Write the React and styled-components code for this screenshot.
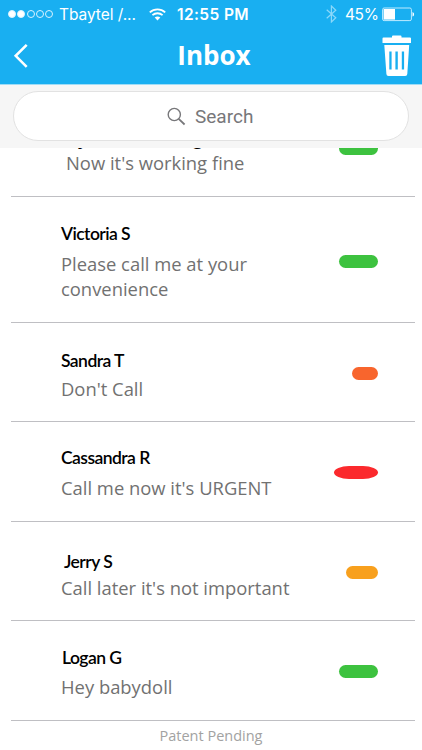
import React from 'react';
import styled, { createGlobalStyle } from 'styled-components';

const GlobalStyle = createGlobalStyle`
  * {
    box-sizing: border-box;
  }

  body {
    margin: 0;
    background-color: white;
  }
`;

const Screen = styled.div`
  width: 422px;
  height: 750px;
  display: flex;
  flex-direction: column;
  overflow: hidden;
  background-color: white;
  font-family: 'Open Sans', 'Noto Sans', sans-serif;
`;

const Header = styled.header`
  height: 84px;
  flex: none;
  background-color: #19aff1;
  color: white;
`;

const StatusBar = styled.div`
  height: 28px;
  display: flex;
  align-items: center;
  padding-left: 8px;
  font-family: Inter, Roboto, sans-serif;
  font-size: 16px;
  white-space: nowrap;
`;

const SignalDots = styled.div`
  display: flex;
  gap: 1.3px;
  width: 51px;
`;

const Dot = styled.span`
  width: 8px;
  height: 8px;
  border: 1px solid #d9f3ff;
  border-radius: 50%;
  background-color: ${({ $filled }) => ($filled ? 'white' : 'transparent')};
`;

const Carrier = styled.span`
  width: 90px;
  font-size: 15.5px;
  letter-spacing: -0.05px;
`;

const Clock = styled.span`
  width: 149px;
  margin-left: 11px;
  font-size: 15.5px;
  font-weight: 600;
  letter-spacing: 0.4px;
`;

const BatteryLevel = styled.span`
  width: 37px;
  margin-left: 8px;
  font-size: 15.5px;
  letter-spacing: -0.4px;
`;

const NavBar = styled.div`
  height: 56px;
  display: grid;
  grid-template-columns: 60px 1fr 60px;
  align-items: center;
  padding: 0 10px 1px 13px;
`;

const NavButton = styled.button`
  display: flex;
  justify-content: ${({ $end }) => ($end ? 'flex-end' : 'flex-start')};
  padding: 0;
  border: 0;
  background: none;
  color: white;
`;

const Title = styled.h1`
  margin: 0 0 2px 3px;
  font-size: 26px;
  font-weight: 700;
  line-height: 32px;
  text-align: center;
`;

const SearchBar = styled.div`
  height: 64px;
  flex: none;
  padding: 6px 13px 8px;
  border-top: 1px solid #9fdcf6;
  background-color: #f6f6f6;
`;

const SearchField = styled.div`
  height: 50px;
  display: flex;
  align-items: center;
  padding-left: 153px;
  gap: 9px;
  border: 1px solid #e2e2e2;
  border-radius: 25px;
  background-color: white;
  color: #77777a;
  font-family: Roboto, sans-serif;
  font-size: 19px;
`;

const ListViewport = styled.main`
  height: 573px;
  flex: none;
  display: flex;
  flex-direction: column;
  justify-content: flex-end;
  overflow: hidden;
  padding: 0 7px 0 11px;
`;

const Row = styled.article`
  height: ${({ $height }) => $height}px;
  flex: none;
  display: flex;
  align-items: center;
  justify-content: space-between;
  padding-left: 50px;
  padding-right: 37px;
  border-bottom: 1px solid #bfbfc3;
`;

const RowText = styled.div`
  align-self: flex-end;
  width: 240px;
  padding-bottom: ${({ $bottom }) => $bottom || 21}px;
`;

const Sender = styled.h2`
  margin: 0;
  padding-left: ${({ $indent }) => $indent || 0}px;
  padding-bottom: ${({ $gap }) => $gap}px;
  color: black;
  font-family: ${({ $large }) => ($large ? "'Open Sans'" : 'Lato')}, sans-serif;
  font-size: ${({ $large }) => ($large ? 17 : 17.5)}px;
  font-weight: ${({ $large }) => ($large ? 700 : 600)};
  line-height: 22px;
  letter-spacing: ${({ $large }) => ($large ? -0.3 : -0.55)}px;
  white-space: nowrap;
`;

const Message = styled.p`
  margin: 0;
  padding-left: ${({ $indent }) => $indent || 0}px;
  color: #717171;
  font-size: 18.4px;
  line-height: 25px;
  white-space: pre-line;
`;

const Badge = styled.span`
  width: ${({ $width }) => $width}px;
  height: 13px;
  flex: none;
  margin-top: ${({ $drop }) => $drop || 2}px;
  border-radius: ${({ $oval }) => ($oval ? '15px / 6.5px' : '7px')};
  background-color: ${({ $color }) => $color};
`;

const Footer = styled.footer`
  flex: 1;
  padding-top: 5px;
  color: #a2a2a2;
  font-size: 14.5px;
  line-height: 20px;
  text-align: center;
`;

const WifiIcon = () => (
  <svg width="17" height="13" viewBox="0 0 17 13" fill="none" stroke="white" strokeWidth="1.8">
    <path d="M0.8 4.4C5.2 0.4 11.8 0.4 16.2 4.4" />
    <path d="M3.4 7.2C6.3 4.6 10.7 4.6 13.6 7.2" />
    <path d="M8.5 12.4L5.7 9.5C7.3 8.1 9.7 8.1 11.3 9.5Z" fill="white" stroke="none" />
  </svg>
);

const BluetoothIcon = () => (
  <svg width="11" height="18" viewBox="0 0 11 18" fill="none" stroke="#8ad8fa" strokeWidth="1.2">
    <path d="M0.7 4.8L9.8 12.8L5.4 17V1L9.8 5.2L0.7 13.2" />
  </svg>
);

const BatteryIcon = () => (
  <svg width="33" height="15" viewBox="0 0 33 15" fill="none">
    <rect x="0.6" y="1" width="28.8" height="12.6" rx="1.5" stroke="#bfeaff" />
    <rect x="1.6" y="2" width="11.4" height="10.6" fill="white" />
    <path d="M30.5 5C32.6 5.8 32.6 8.8 30.5 9.6Z" fill="white" />
  </svg>
);

const BackIcon = () => (
  <svg width="16" height="26" viewBox="0 0 16 26" fill="none" stroke="white" strokeWidth="2.6">
    <path d="M13.7 1.8L2.7 12.8L13.7 23.8" />
  </svg>
);

const TrashIcon = () => (
  <svg width="30" height="42" viewBox="0 0 30 42" fill="white">
    <path d="M0.5 3.5Q0.5 2.5 1.5 2.5H10V1.5Q10 0.5 11 0.5H18.5Q19.5 0.5 19.5 1.5V2.5H28Q29 2.5 29 3.5V8H0.5Z" />
    <path
      fillRule="evenodd"
      d="M2.3 10H27.2L25.3 39Q25.2 41 23.2 41H6.5Q4.5 41 4.4 39ZM7.3 16.5V34.5H9.6V16.5ZM13.4 16.5V34.5H15.8V16.5ZM19.8 16.5V34.5H22.1V16.5Z"
    />
  </svg>
);

const SearchIcon = () => (
  <svg width="19" height="19" viewBox="0 0 19 19" fill="none" stroke="#77777a" strokeWidth="1.4">
    <circle cx="7.3" cy="7.5" r="6.1" />
    <path d="M11.7 11.9L17.6 17.5" strokeWidth="1.8" />
  </svg>
);

const messages = [
  {
    sender: 'Myles Armstrong', text: "Now it's working fine", height: 100, gap: 0, textIndent: 5, indent: 1, large: true, color: '#3dc23f', width: 39, drop: 3,
  },
  {
    sender: 'Victoria S', text: 'Please call me at your\nconvenience', height: 126, gap: 6, color: '#3dc23f', width: 39, drop: 3,
  },
  {
    sender: 'Sandra T', text: "Don't Call", height: 99, gap: 4, bottom: 20, color: '#f8652d', width: 26,
  },
  {
    sender: 'Cassandra R', text: "Call me now it's URGENT", height: 100, gap: 6, color: '#fb292d', width: 44, oval: true,
  },
  {
    sender: 'Jerry S', text: "Call later it's not important", height: 99, gap: 2, bottom: 20, indent: 3, color: '#f8a01d', width: 32,
  },
  {
    sender: 'Logan G', text: 'Hey babydoll', height: 100, gap: 5, indent: 1, color: '#3dc23f', width: 39,
  },
];

const InboxRow = ({
  sender, text, height, gap, bottom, indent, textIndent, large, color, width, oval, drop,
}) => (
  <Row $height={height}>
    <RowText $bottom={bottom}>
      <Sender $gap={gap} $indent={indent} $large={large}>{sender}</Sender>
      <Message $indent={textIndent}>{text}</Message>
    </RowText>
    <Badge $color={color} $width={width} $oval={oval} $drop={drop} />
  </Row>
);

const App = () => (
  <Screen>
    <GlobalStyle />
    <Header>
      <StatusBar>
        <SignalDots>
          <Dot $filled />
          <Dot $filled />
          <Dot />
          <Dot />
          <Dot />
        </SignalDots>
        <Carrier>Tbaytel /...</Carrier>
        <WifiIcon />
        <Clock>12:55 PM</Clock>
        <BluetoothIcon />
        <BatteryLevel>45%</BatteryLevel>
        <BatteryIcon />
      </StatusBar>
      <NavBar>
        <NavButton aria-label="Back"><BackIcon /></NavButton>
        <Title>Inbox</Title>
        <NavButton aria-label="Delete" $end><TrashIcon /></NavButton>
      </NavBar>
    </Header>
    <SearchBar>
      <SearchField>
        <SearchIcon />
        <span>Search</span>
      </SearchField>
    </SearchBar>
    <ListViewport>
      {messages.map((message) => (
        <InboxRow key={message.sender} {...message} />
      ))}
    </ListViewport>
    <Footer>Patent Pending</Footer>
  </Screen>
);

export default App;
